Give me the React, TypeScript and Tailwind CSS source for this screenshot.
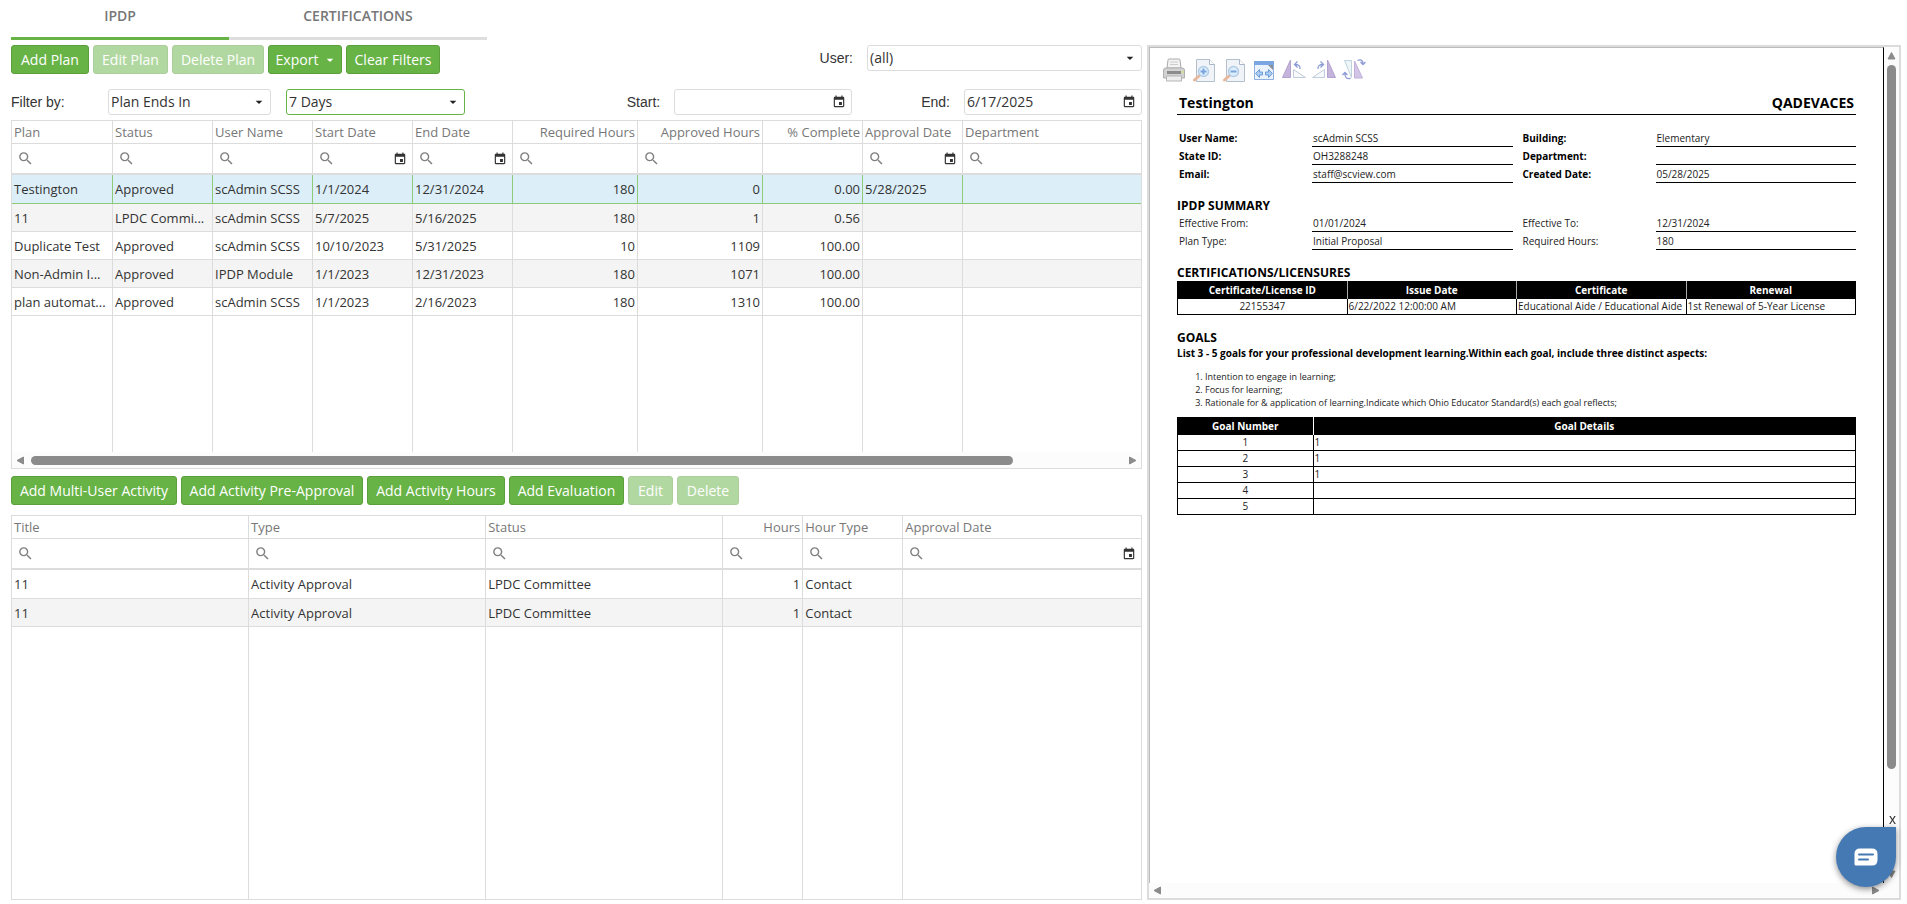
import React, { useState } from "react";
import { MdArrowDropDown, MdEvent, MdSearch } from "react-icons/md";

type Column = {
    title: string;
    width?: string;
    align?: "right";
    filter?: "text" | "date" | "none";
};

const planColumns: Column[] = [
    { title: "Plan", width: "w-[101px]" },
    { title: "Status", width: "w-[100px]" },
    { title: "User Name", width: "w-[100px]" },
    { title: "Start Date", width: "w-[100px]", filter: "date" },
    { title: "End Date", width: "w-[100px]", filter: "date" },
    { title: "Required Hours", width: "w-[125px]", align: "right" },
    { title: "Approved Hours", width: "w-[125px]", align: "right" },
    { title: "% Complete", width: "w-[100px]", align: "right", filter: "none" },
    { title: "Approval Date", width: "w-[100px]", filter: "date" },
    { title: "Department" },
];

const plans = [
    ["Testington", "Approved", "scAdmin SCSS", "1/1/2024", "12/31/2024", "180", "0", "0.00", "5/28/2025", ""],
    ["11", "LPDC Commi...", "scAdmin SCSS", "5/7/2025", "5/16/2025", "180", "1", "0.56", "", ""],
    ["Duplicate Test", "Approved", "scAdmin SCSS", "10/10/2023", "5/31/2025", "10", "1109", "100.00", "", ""],
    ["Non-Admin I...", "Approved", "IPDP Module", "1/1/2023", "12/31/2023", "180", "1071", "100.00", "", ""],
    ["plan automat...", "Approved", "scAdmin SCSS", "1/1/2023", "2/16/2023", "180", "1310", "100.00", "", ""],
];

const activityColumns: Column[] = [
    { title: "Title", width: "w-[21%]" },
    { title: "Type", width: "w-[21%]" },
    { title: "Status", width: "w-[21%]" },
    { title: "Hours", width: "w-[80px]", align: "right" },
    { title: "Hour Type", width: "w-[100px]" },
    { title: "Approval Date", filter: "date" },
];

const activities = [
    ["11", "Activity Approval", "LPDC Committee", "1", "Contact", ""],
    ["11", "Activity Approval", "LPDC Committee", "1", "Contact", ""],
];

const goals = ["1", "1", "1", "", ""];

type ButtonProps = { children: React.ReactNode; width: string; disabled?: boolean };

const GreenButton = ({ children, width, disabled }: ButtonProps) => (
    <button
        type="button"
        disabled={disabled}
        className={`${width} h-[29px] shrink-0 flex items-center justify-center whitespace-nowrap rounded-[3px] border border-[#5a9f3c] bg-[#67b346] text-white hover:bg-[#5da33f] disabled:opacity-50`}
    >
        {children}
    </button>
);

type SelectBoxProps = { id: string; label: string; width: string; options: string[]; active?: boolean };

const SelectBox = ({ id, label, width, options, active }: SelectBoxProps) => (
    <div className={`relative ${width} shrink-0`}>
        <select
            id={id}
            aria-label={label}
            className={`w-full h-[26px] appearance-none rounded-[3px] border bg-white pl-[2px] pr-6 outline-none ${active ? "border-[#67b346]" : "border-[#dcdcdc]"}`}
        >
            {options.map((option) => (
                <option key={option}>{option}</option>
            ))}
        </select>
        <MdArrowDropDown size={16} className="absolute right-1 top-[5px] pointer-events-none text-[#222]" />
    </div>
);

const DateBox = ({ id, value }: { id: string; value: string }) => (
    <div className="w-[178px] h-[26px] flex shrink-0 items-center rounded-[3px] border border-[#dcdcdc] bg-white pl-[2px] pr-[5px]">
        <input id={id} type="text" defaultValue={value} className="min-w-0 flex-1 outline-none" />
        <button type="button" aria-label="Open calendar">
            <MdEvent size={14} className="text-[#333]" />
        </button>
    </div>
);

type GridProps = { label: string; columns: Column[]; rows: string[][]; selectable?: boolean };

const DataGrid = ({ label, columns, rows, selectable }: GridProps) => {
    const [selected, setSelected] = useState(0);
    const last = columns.length - 1;

    return (
        <table aria-label={label} className="w-full h-full table-fixed border-separate border-spacing-0 text-[13px]">
            <thead>
                <tr>
                    {columns.map((col, i) => (
                        <th
                            key={col.title}
                            className={`${col.width ?? ""} h-[23px] border-b border-[#dcdcdc] px-[2px] py-0 font-normal leading-5 text-[#777] whitespace-nowrap ${i < last ? "border-r" : ""} ${col.align === "right" ? "text-right" : "text-left"}`}
                        >
                            {col.title}
                        </th>
                    ))}
                </tr>
                <tr>
                    {columns.map((col, i) => (
                        <td key={col.title} className={`h-[31px] border-b-2 border-[#dcdcdc] p-0 ${i < last ? "border-r" : ""}`}>
                            {col.filter !== "none" && (
                                <div className="flex items-center px-[5px]">
                                    <MdSearch size={17} className="shrink-0 text-[#808080]" />
                                    <input type="text" aria-label={`Filter ${col.title}`} className="min-w-0 flex-1 h-5 outline-none" />
                                    {col.filter === "date" && (
                                        <button type="button" aria-label={`Pick ${col.title}`}>
                                            <MdEvent size={14} className="text-[#333]" />
                                        </button>
                                    )}
                                </div>
                            )}
                        </td>
                    ))}
                </tr>
            </thead>
            <tbody>
                {rows.map((row, r) => {
                    const isSelected = selectable && r === selected;
                    return (
                        <tr
                            key={r}
                            onClick={() => setSelected(r)}
                            className={isSelected ? "bg-[#dceef8]" : r % 2 === 1 ? "bg-[#f4f4f4]" : "bg-white"}
                        >
                            {row.map((cell, i) => (
                                <td
                                    key={i}
                                    className={`${r === 0 ? "h-[29px]" : "h-[28px]"} border-b px-[2px] py-0 leading-5 truncate ${isSelected ? "border-[#8fca78]" : "border-[#dcdcdc]"} ${i < last ? "border-r" : ""} ${columns[i].align === "right" ? "text-right" : ""}`}
                                >
                                    {cell}
                                </td>
                            ))}
                        </tr>
                    );
                })}
                {/* Empty row that carries the column lines down to the bottom */}
                <tr>
                    {columns.map((col, i) => (
                        <td key={col.title} className={`h-full p-0 border-[#dcdcdc] ${i < last ? "border-r" : ""}`} />
                    ))}
                </tr>
            </tbody>
        </table>
    );
};

const Arrow = ({ path }: { path: string }) => (
    <svg width="9" height="9" viewBox="0 0 9 9" className="shrink-0 text-[#8b8b8b]" aria-hidden="true">
        <path d={path} fill="currentColor" stroke="currentColor" strokeLinejoin="round" />
    </svg>
);

const PrintIcon = () => (
    <svg width="24" height="24" viewBox="0 0 24 24" aria-hidden="true">
        <path d="M5 10 6 2Q6 1 7 1H17Q18 1 18 2L19 10Z" fill="#f3f3f3" stroke="#aaa" />
        <path d="M8 4H16M8 6.500H16" stroke="#ccc" />
        <path d="M1.500 12Q1.500 10 4 10H20Q22.500 10 22.500 12V20H1.500Z" fill="#d2d2d2" stroke="#b0b0b0" />
        <path d="M5 13H19V16H5Z" fill="#8c8c8c" />
        <path d="M4.500 18H19.500V23H4.500Z" fill="#eee" stroke="#b5b5b5" />
        <circle cx="20.500" cy="14" r="1" fill="#d9e86a" />
    </svg>
);

const ZoomIcon = ({ plus }: { plus?: boolean }) => (
    <svg width="24" height="24" viewBox="0 0 24 24" aria-hidden="true">
        <path d="M4.500 1.500H17.500L22.500 6.500V23.500H4.500Z" fill="#f0f4f9" stroke="#b4bfcc" />
        <path d="M17.500 1.500V6.500H22.500" fill="#fff" stroke="#a9b6c6" />
        <path d="M7 18 2.500 22" stroke="#e6b79b" strokeWidth="3" strokeLinecap="round" />
        <circle cx="11.500" cy="13.500" r="5" fill="#ddeffc" stroke="#b3cce6" strokeWidth="1.500" />
        <path d={plus ? "M8.500 13.500H14.500M11.500 10.500V16.500" : "M8.500 13.500H14.500"} stroke="#7ba5e0" strokeWidth="2" />
    </svg>
);

const FitIcon = () => (
    <svg width="24" height="24" viewBox="0 0 24 24" aria-hidden="true">
        <path d="M2.500 3.500H21.500V21.500H2.500Z" fill="#eaf3fc" stroke="#8fb0dc" />
        <path d="M2 3H22V7H2Z" fill="#7aa7e2" />
        <path d="M16 7H21V12Z" fill="#8b8f98" />
        <path d="M3.500 15.500 7.500 11.500V14H10.500V17H7.500V19.500ZM20.500 15.500 16.500 11.500V14H13.500V17H16.500V19.500Z" fill="#a9ccf3" stroke="#6f9cd8" />
    </svg>
);

const RotateLeftIcon = () => (
    <svg width="24" height="24" viewBox="0 0 24 24" aria-hidden="true">
        <path d="M8.500 2V19.500H.5Z" fill="#c4b4dc" stroke="#b3a1cf" />
        <path d="M11.500 11.500V19.500H23.500Z" fill="#f7f9fc" stroke="#c0ccda" />
        <path d="M18 11Q18.500 6.500 13 6.500M15.500 3.500 12.500 6.500 15.500 9.500" fill="none" stroke="#8c9ad6" strokeWidth="1.300" />
    </svg>
);

const RotateRightIcon = () => (
    <svg width="24" height="24" viewBox="0 0 24 24" aria-hidden="true">
        <path d="M15.500 2V19.500H23.500Z" fill="#c4b4dc" stroke="#b3a1cf" />
        <path d="M12.500 11.500V19.500H.5Z" fill="#f7f9fc" stroke="#c0ccda" />
        <path d="M6 11Q5.500 6.500 11 6.500M8.500 3.500 11.500 6.500 8.500 9.500" fill="none" stroke="#8c9ad6" strokeWidth="1.300" />
    </svg>
);

const FlipIcon = () => (
    <svg width="24" height="24" viewBox="0 0 24 24" aria-hidden="true">
        <path d="M2.500 2.500H9.500V19.500Z" fill="#eef6f8" stroke="#bfd2dc" />
        <path d="M12.500 3V20H20.500Z" fill="#d3c5e6" stroke="#c0afd9" />
        <path d="M15.500 2.500Q21 .5 21 6M18.500 4 21 6.500 23.500 4" fill="none" stroke="#8c9ad6" strokeWidth="1.300" />
        <path d="M3 15Q2.500 21.500 8.500 20.500M.5 17 3 14.500 5.500 17" fill="none" stroke="#8c9ad6" strokeWidth="1.300" />
    </svg>
);

const reportTools = [
    { name: "Print", icon: <PrintIcon /> },
    { name: "Zoom in", icon: <ZoomIcon plus /> },
    { name: "Zoom out", icon: <ZoomIcon /> },
    { name: "Fit width", icon: <FitIcon /> },
    { name: "Rotate left", icon: <RotateLeftIcon /> },
    { name: "Rotate right", icon: <RotateRightIcon /> },
    { name: "Flip", icon: <FlipIcon /> },
];

type FieldsProps = { items: [string, string][]; bold?: boolean };

// Label and underlined value, two pairs to a line
const Fields = ({ items, bold }: FieldsProps) => (
    <dl className="grid grid-cols-2 gap-x-2">
        {items.map(([name, value]) => (
            <div key={name} className="flex leading-[18px]">
                <dt className={`w-[135px] h-[18px] shrink-0 pl-[2px] ${bold ? "font-bold text-black" : ""}`}>{name}</dt>
                <dd className="h-[18px] flex-1 border-b border-black pl-px">{value}</dd>
            </div>
        ))}
    </dl>
);

const Report = () => (
    <div className="text-[10px] leading-4 text-[#222] px-[27px]">
        <div className="flex justify-between border-b border-black px-[2px] pb-px text-sm leading-5 font-bold text-black">
            <h1>Testington</h1>
            <span>QADEVACES</span>
        </div>
        <div className="pt-[14px]">
            <Fields
                bold
                items={[
                    ["User Name:", "scAdmin SCSS"],
                    ["Building:", "Elementary"],
                    ["State ID:", "OH3288248"],
                    ["Department:", ""],
                    ["Email:", "staff@scview.com"],
                    ["Created Date:", "05/28/2025"],
                ]}
            />
        </div>
        <h2 className="pt-[15px] text-[12px] leading-4 font-bold text-black">IPDP SUMMARY</h2>
        <Fields
            items={[
                ["Effective From:", "01/01/2024"],
                ["Effective To:", "12/31/2024"],
                ["Plan Type:", "Initial Proposal"],
                ["Required Hours:", "180"],
            ]}
        />
        <h2 className="pt-[15px] text-[12px] leading-4 font-bold text-black">CERTIFICATIONS/LICENSURES</h2>
        <table className="w-full table-fixed border-collapse border border-black">
            <thead>
                <tr className="bg-black text-white">
                    {["Certificate/License ID", "Issue Date", "Certificate", "Renewal"].map((title) => (
                        <th key={title} className="h-4 border-l border-[#aaa] p-0 leading-4 first:border-black">
                            {title}
                        </th>
                    ))}
                </tr>
            </thead>
            <tbody>
                <tr className="whitespace-nowrap">
                    <td className="h-4 border border-black p-0 leading-[15px] text-center">22155347</td>
                    <td className="border border-black p-0 pl-px leading-[15px]">6/22/2022 12:00:00 AM</td>
                    <td className="border border-black p-0 pl-px leading-[15px]">Educational Aide / Educational Aide</td>
                    <td className="border border-black p-0 pl-px leading-[15px]">1st Renewal of 5-Year License</td>
                </tr>
            </tbody>
        </table>
        <h2 className="pt-[15px] text-[12px] leading-[15px] font-bold text-black">GOALS</h2>
        <p className="font-bold text-black">
            List 3 - 5 goals for your professional development learning.Within each goal, include three distinct aspects:
        </p>
        <ol className="list-decimal pl-7 pt-[9px] pb-2 text-[9px] leading-[13px]">
            <li>Intention to engage in learning;</li>
            <li>Focus for learning;</li>
            <li>Rationale for &amp; application of learning.Indicate which Ohio Educator Standard(s) each goal reflects;</li>
        </ol>
        <table className="w-full table-fixed border-collapse border border-black">
            <thead>
                <tr className="bg-black text-white">
                    <th className="w-1/5 h-4 p-0 leading-4">Goal Number</th>
                    <th className="border-l border-white p-0 leading-4">Goal Details</th>
                </tr>
            </thead>
            <tbody>
                {goals.map((goal, i) => (
                    <tr key={i}>
                        <td className="h-4 border border-black p-0 leading-[15px] text-center">{i + 1}</td>
                        <td className="border border-black p-0 pl-px leading-[15px]">{goal}</td>
                    </tr>
                ))}
            </tbody>
        </table>
    </div>
);

const App = () => {
    return (
        <div className="h-screen min-h-[760px] flex gap-[5px] bg-white pl-[11px] pr-[6px] pb-1 font-['Open_Sans',sans-serif] text-sm text-[#333]">
            <main className="flex min-w-0 flex-[1131] flex-col">
                <nav role="tablist" className="flex text-[#777] font-semibold">
                    <button type="button" role="tab" aria-selected="true" className="w-[218px] h-10 border-b-[3px] border-[#67b346] pb-[6px]">
                        IPDP
                    </button>
                    <button type="button" role="tab" aria-selected="false" className="w-[258px] h-10 border-b-[3px] border-[#dedede] pb-[6px]">
                        CERTIFICATIONS
                    </button>
                </nav>

                <div className="flex items-start justify-between pt-[5px]">
                    <div className="flex gap-1">
                        <GreenButton width="w-[78px]">Add Plan</GreenButton>
                        <GreenButton width="w-[75px]" disabled>Edit Plan</GreenButton>
                        <GreenButton width="w-[92px]" disabled>Delete Plan</GreenButton>
                        <GreenButton width="w-[74px]">
                            <span className="pl-1">Export</span>
                            <MdArrowDropDown size={16} className="ml-1" />
                        </GreenButton>
                        <GreenButton width="w-[94px]">Clear Filters</GreenButton>
                    </div>
                    <div className="flex items-center gap-[14px]">
                        <label htmlFor="user" className="font-['Liberation_Sans',sans-serif]">User:</label>
                        <SelectBox id="user" label="User" width="w-[275px]" options={["(all)"]} />
                    </div>
                </div>

                <div className="flex items-center justify-between pt-[15px] pb-[5px]">
                    <div className="flex items-center">
                        <label htmlFor="filter" className="w-[97px] font-['Liberation_Sans',sans-serif]">Filter by:</label>
                        <SelectBox id="filter" label="Filter by" width="w-[163px]" options={["Plan Ends In", "Plan Starts In"]} />
                        <div className="pl-[15px]">
                            <SelectBox id="period" label="Period" width="w-[179px]" options={["7 Days", "30 Days"]} active />
                        </div>
                    </div>
                    <div className="flex items-center">
                        <label htmlFor="start" className="pr-[14px] font-['Liberation_Sans',sans-serif]">Start:</label>
                        <DateBox id="start" value="" />
                        <label htmlFor="end" className="pl-[69px] pr-[14px] font-['Liberation_Sans',sans-serif]">End:</label>
                        <DateBox id="end" value="6/17/2025" />
                    </div>
                </div>

                <section className="h-[349px] shrink-0 flex flex-col border border-[#dcdcdc]">
                    <div className="min-h-0 flex-1">
                        <DataGrid label="Plans" columns={planColumns} rows={plans} selectable />
                    </div>
                    <div className="h-4 shrink-0 flex items-center gap-[6px] bg-[#fcfcfc] px-1">
                        <Arrow path="M1 4.500 7.500 1V8Z" />
                        <div className="flex-1">
                            <div className="w-[90%] h-[9px] rounded-full bg-[#8b8b8b]" />
                        </div>
                        <Arrow path="M8 4.500 1.500 1V8Z" />
                    </div>
                </section>

                <div className="flex gap-1 pt-[7px] pb-[10px]">
                    <GreenButton width="w-[166px]">Add Multi-User Activity</GreenButton>
                    <GreenButton width="w-[182px]">Add Activity Pre-Approval</GreenButton>
                    <GreenButton width="w-[138px]">Add Activity Hours</GreenButton>
                    <GreenButton width="w-[115px]">Add Evaluation</GreenButton>
                    <GreenButton width="w-[45px]" disabled>Edit</GreenButton>
                    <GreenButton width="w-[62px]" disabled>Delete</GreenButton>
                </div>

                <section className="min-h-0 flex-1 border border-[#dcdcdc]">
                    <DataGrid label="Activities" columns={activityColumns} rows={activities} />
                </section>
            </main>

            <aside className="mt-[45px] flex min-w-0 flex-[750] flex-col border-2 border-[#dcdcdc]">
                <div className="flex min-h-0 flex-1">
                    <div className="min-w-0 flex-1 overflow-hidden border-l border-t border-r border-l-[#bbb] border-t-[#bbb] border-r-black">
                        <div className="flex gap-[6px] pl-3 pt-[10px] pb-[11px]">
                            {reportTools.map((tool) => (
                                <button key={tool.name} type="button" aria-label={tool.name}>
                                    {tool.icon}
                                </button>
                            ))}
                        </div>
                        <Report />
                    </div>
                    <div className="w-[15px] flex flex-col items-center gap-[5px] bg-[#fcfcfc] py-1">
                        <Arrow path="M4.500 1.500 8 8H1Z" />
                        <div className="w-[9px] flex-1">
                            <div className="w-full h-[88%] rounded-full bg-[#8b8b8b]" />
                        </div>
                        <Arrow path="M4.500 7.500 8 1H1Z" />
                    </div>
                </div>
                <div className="h-[15px] flex items-center justify-between bg-[#fcfcfc] pl-1 pr-[19px]">
                    <Arrow path="M1 4.500 7.500 1V8Z" />
                    <Arrow path="M8 4.500 1.500 1V8Z" />
                </div>
            </aside>

            {/* Chat launcher floats over the report */}
            <div className="fixed right-[11px] bottom-[17px] flex flex-col items-end">
                <button type="button" aria-label="Close chat" className="font-['Liberation_Sans',sans-serif] leading-4">x</button>
                <button
                    type="button"
                    aria-label="Open chat"
                    className="size-[60px] flex items-center justify-center rounded-full rounded-tr-lg bg-[#4579b3] shadow-[0_2px_6px_rgba(0,0,0,0.45)]"
                >
                    <svg width="24" height="18" viewBox="0 0 24 18" aria-hidden="true">
                        <path d="M6 .5H18Q23.500 .5 23.500 6V12Q23.500 17.500 18 17.500H2Q.5 17.500 .5 16V6Q.5 .5 6 .5Z" fill="#fff" />
                        <path d="M5 6.500H19M5 11.500H14" stroke="#4579b3" strokeWidth="2" strokeLinecap="round" />
                    </svg>
                </button>
            </div>
        </div>
    );
};

export default App;
